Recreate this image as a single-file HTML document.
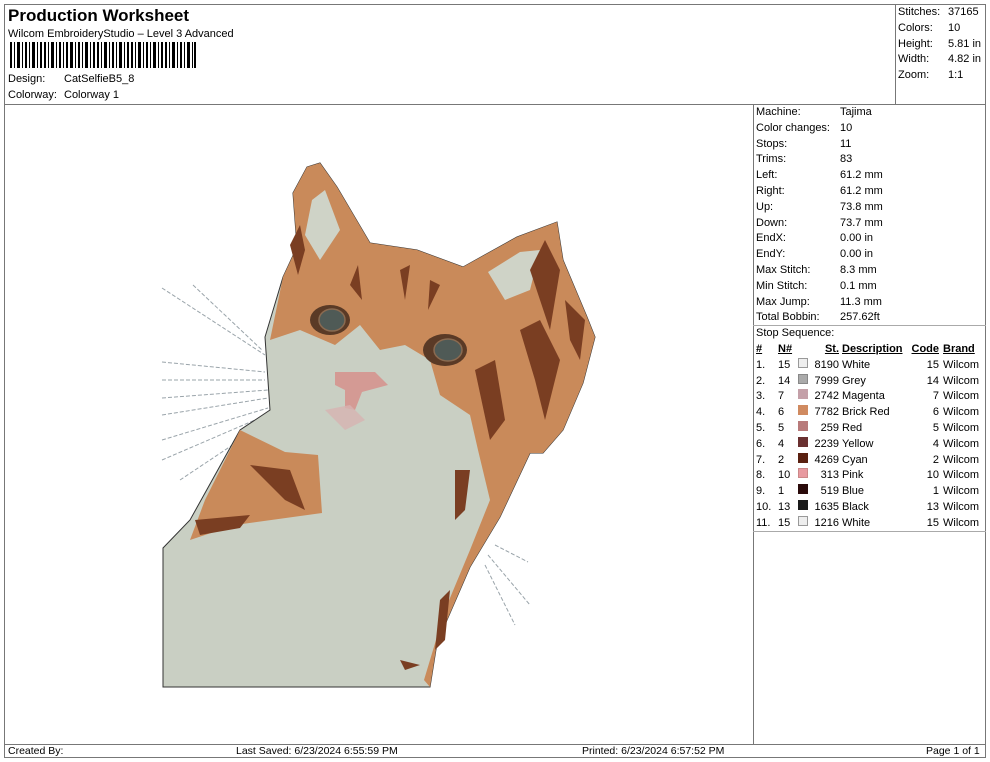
<!DOCTYPE html>
<html><head><meta charset="utf-8"><style>
*{margin:0;padding:0;box-sizing:border-box}
body{width:990px;height:762px;background:#fff;font-family:"Liberation Sans",Arial,sans-serif;font-size:11px;color:#000;position:relative;overflow:hidden}
.a{position:absolute;white-space:nowrap}
.ln{position:absolute;background:#777}
td{padding:0;height:15.8px;white-space:nowrap;font-size:11px}
</style></head><body>
<div class="ln" style="left:4px;top:4px;width:982px;height:1px"></div>
<div class="ln" style="left:4px;top:4px;width:1px;height:754px"></div>
<div class="ln" style="left:985px;top:4px;width:1px;height:754px"></div>
<div class="ln" style="left:4px;top:104px;width:982px;height:1px"></div>
<div class="ln" style="left:895px;top:4px;width:1px;height:100px"></div>
<div class="ln" style="left:753px;top:104px;width:1px;height:640px"></div>
<div class="ln" style="left:753px;top:325px;width:233px;height:1px;background:#aaa"></div>
<div class="ln" style="left:753px;top:531px;width:233px;height:1px;background:#aaa"></div>
<div class="ln" style="left:4px;top:744px;width:982px;height:1px"></div>
<div class="ln" style="left:4px;top:757px;width:982px;height:1px"></div>

<div class="a" style="left:8px;top:6px;font-size:17px;font-weight:bold">Production Worksheet</div>
<div class="a" style="left:8px;top:28px">Wilcom EmbroideryStudio – Level 3 Advanced</div>
<svg class="a" style="left:10px;top:42px" width="186" height="26"><g fill="#000">
<rect x="0" width="2" height="26"/><rect x="4" width="1" height="26"/><rect x="7" width="3" height="26"/><rect x="12" width="1" height="26"/><rect x="15" width="2" height="26"/><rect x="19" width="1" height="26"/><rect x="22" width="3" height="26"/><rect x="27" width="1" height="26"/><rect x="30" width="2" height="26"/><rect x="34" width="2" height="26"/><rect x="38" width="1" height="26"/><rect x="41" width="3" height="26"/><rect x="46" width="1" height="26"/><rect x="49" width="2" height="26"/><rect x="53" width="1" height="26"/><rect x="56" width="2" height="26"/><rect x="60" width="3" height="26"/><rect x="65" width="1" height="26"/><rect x="68" width="2" height="26"/><rect x="72" width="1" height="26"/><rect x="75" width="3" height="26"/><rect x="80" width="1" height="26"/><rect x="83" width="2" height="26"/><rect x="87" width="2" height="26"/><rect x="91" width="1" height="26"/><rect x="94" width="3" height="26"/><rect x="99" width="1" height="26"/><rect x="102" width="2" height="26"/><rect x="106" width="1" height="26"/><rect x="109" width="3" height="26"/><rect x="114" width="1" height="26"/><rect x="117" width="2" height="26"/><rect x="121" width="2" height="26"/><rect x="125" width="1" height="26"/><rect x="128" width="3" height="26"/><rect x="133" width="1" height="26"/><rect x="136" width="2" height="26"/><rect x="140" width="1" height="26"/><rect x="143" width="3" height="26"/><rect x="148" width="1" height="26"/><rect x="151" width="2" height="26"/><rect x="155" width="2" height="26"/><rect x="159" width="1" height="26"/><rect x="162" width="3" height="26"/><rect x="167" width="1" height="26"/><rect x="170" width="2" height="26"/><rect x="174" width="1" height="26"/><rect x="177" width="3" height="26"/><rect x="182" width="1" height="26"/><rect x="184" width="2" height="26"/></g></svg>
<div class="a" style="left:8px;top:73px">Design:</div><div class="a" style="left:64px;top:73px">CatSelfieB5_8</div>
<div class="a" style="left:8px;top:89px">Colorway:</div><div class="a" style="left:64px;top:89px">Colorway 1</div>

<div class="a" style="left:898px;top:5px;line-height:15.8px">Stitches:<br>Colors:<br>Height:<br>Width:<br>Zoom:</div>
<div class="a" style="left:948px;top:5px;line-height:15.8px">37165<br>10<br>5.81 in<br>4.82 in<br>1:1</div>

<div class="a" style="left:756px;top:105px;line-height:15.8px">Machine:<br>Color changes:<br>Stops:<br>Trims:<br>Left:<br>Right:<br>Up:<br>Down:<br>EndX:<br>EndY:<br>Max Stitch:<br>Min Stitch:<br>Max Jump:<br>Total Bobbin:<br>Stop Sequence:</div>
<div class="a" style="left:840px;top:105px;line-height:15.8px">Tajima<br>10<br>11<br>83<br>61.2 mm<br>61.2 mm<br>73.8 mm<br>73.7 mm<br>0.00 in<br>0.00 in<br>8.3 mm<br>0.1 mm<br>11.3 mm<br>257.62ft</div>

<table class="a" style="left:756px;top:342px;border-collapse:collapse;line-height:15.8px">
<tr style="font-weight:bold;text-decoration:underline"><td style="width:22px">#</td><td style="width:20px">N#</td><td style="width:14px"></td><td style="width:27px;text-align:right">St.</td><td style="width:70px;padding-left:3px">Description</td><td style="width:30px;text-align:right">Code</td><td style="padding-left:4px">Brand</td></tr>
<tr><td>1.</td><td>15</td><td><i style="display:inline-block;width:10px;height:10px;background:#eee;border:1px solid #999"></i></td><td style="text-align:right">8190</td><td style="padding-left:3px">White</td><td style="text-align:right">15</td><td style="padding-left:4px">Wilcom</td></tr>
<tr><td>2.</td><td>14</td><td><i style="display:inline-block;width:10px;height:10px;background:#aaa;border:1px solid #888"></i></td><td style="text-align:right">7999</td><td style="padding-left:3px">Grey</td><td style="text-align:right">14</td><td style="padding-left:4px">Wilcom</td></tr>
<tr><td>3.</td><td>7</td><td><i style="display:inline-block;width:10px;height:10px;background:#c4a0a8"></i></td><td style="text-align:right">2742</td><td style="padding-left:3px">Magenta</td><td style="text-align:right">7</td><td style="padding-left:4px">Wilcom</td></tr>
<tr><td>4.</td><td>6</td><td><i style="display:inline-block;width:10px;height:10px;background:#d08a60"></i></td><td style="text-align:right">7782</td><td style="padding-left:3px">Brick Red</td><td style="text-align:right">6</td><td style="padding-left:4px">Wilcom</td></tr>
<tr><td>5.</td><td>5</td><td><i style="display:inline-block;width:10px;height:10px;background:#b87a7a"></i></td><td style="text-align:right">259</td><td style="padding-left:3px">Red</td><td style="text-align:right">5</td><td style="padding-left:4px">Wilcom</td></tr>
<tr><td>6.</td><td>4</td><td><i style="display:inline-block;width:10px;height:10px;background:#6a3030"></i></td><td style="text-align:right">2239</td><td style="padding-left:3px">Yellow</td><td style="text-align:right">4</td><td style="padding-left:4px">Wilcom</td></tr>
<tr><td>7.</td><td>2</td><td><i style="display:inline-block;width:10px;height:10px;background:#5a2010"></i></td><td style="text-align:right">4269</td><td style="padding-left:3px">Cyan</td><td style="text-align:right">2</td><td style="padding-left:4px">Wilcom</td></tr>
<tr><td>8.</td><td>10</td><td><i style="display:inline-block;width:10px;height:10px;background:#e89aa0;border:1px solid #c88"></i></td><td style="text-align:right">313</td><td style="padding-left:3px">Pink</td><td style="text-align:right">10</td><td style="padding-left:4px">Wilcom</td></tr>
<tr><td>9.</td><td>1</td><td><i style="display:inline-block;width:10px;height:10px;background:#2a0a0a"></i></td><td style="text-align:right">519</td><td style="padding-left:3px">Blue</td><td style="text-align:right">1</td><td style="padding-left:4px">Wilcom</td></tr>
<tr><td>10.</td><td>13</td><td><i style="display:inline-block;width:10px;height:10px;background:#1a1a1a"></i></td><td style="text-align:right">1635</td><td style="padding-left:3px">Black</td><td style="text-align:right">13</td><td style="padding-left:4px">Wilcom</td></tr>
<tr><td>11.</td><td>15</td><td><i style="display:inline-block;width:10px;height:10px;background:#eee;border:1px solid #999"></i></td><td style="text-align:right">1216</td><td style="padding-left:3px">White</td><td style="text-align:right">15</td><td style="padding-left:4px">Wilcom</td></tr>
</table>

<svg class="a" style="left:0;top:0" width="753" height="744">
<g stroke="#9aa4aa" stroke-width="1" stroke-dasharray="4,2" fill="none">
<path d="M162,288 L265,355"/><path d="M193,285 L262,350"/><path d="M162,362 L265,372"/><path d="M162,380 L265,380"/><path d="M162,398 L268,390"/><path d="M162,415 L268,398"/><path d="M162,440 L268,408"/><path d="M162,460 L255,420"/><path d="M180,480 L240,440"/><path d="M180,535 L225,470"/>
<path d="M495,545 L528,562"/><path d="M488,555 L530,605"/><path d="M485,565 L515,625"/></g>
<polygon fill="#c9cfc3" stroke="#333" stroke-width="1" points="163,548 190,520 240,430 270,410 265,337 283,277 297,247 293,193 307,167 320,163 337,187 370,243 417,250 463,267 517,237 557,222 563,260 587,317 595,337 583,383 563,430 543,453 530,453 500,517 470,567 437,643 430,687 163,687"/>
<polygon fill="#c98a5a" points="283,277 297,247 293,193 307,167 320,163 337,187 370,243 417,250 463,267 517,237 557,222 563,260 587,317 595,337 583,383 563,430 543,453 530,453 500,517 470,567 437,643 430,687 424,680 445,610 470,550 490,500 478,450 470,415 440,395 430,360 405,345 380,350 360,325 335,345 300,330 270,340"/>
<polygon fill="#c98a5a" points="240,430 285,452 318,455 322,513 235,525 190,540 205,500"/>
<polygon fill="#cfd3c7" points="312,200 325,190 340,230 320,260 305,235"/>
<polygon fill="#cfd3c7" points="488,272 520,252 540,250 530,290 505,300"/>
<g fill="#7a3e22">
<path d="M290,245 L300,225 L305,250 L298,275Z"/><path d="M350,285 L358,265 L362,300Z"/><path d="M400,270 L410,265 L405,300Z"/><path d="M430,280 L440,285 L428,310Z"/>
<path d="M530,270 L545,240 L560,270 L550,330 L540,300Z"/><path d="M520,330 L540,320 L560,360 L545,420 L535,380Z"/><path d="M565,300 L585,320 L580,360 L570,340Z"/>
<path d="M475,370 L495,360 L505,420 L490,440Z"/><path d="M455,470 L470,470 L465,510 L455,520Z"/>
<path d="M250,465 L290,470 L305,510 L285,500Z"/><path d="M195,520 L250,515 L240,528 L200,535Z"/>
<path d="M440,600 L450,590 L445,640 L435,650Z"/><path d="M400,660 L420,665 L405,670Z"/>
</g>
<ellipse cx="330" cy="320" rx="20" ry="15" fill="#5a3a26"/><ellipse cx="332" cy="320" rx="13" ry="11" fill="#4f5a56"/><ellipse cx="332" cy="320" rx="13" ry="11" fill="none" stroke="#8a6a50" stroke-width="1.5"/>
<ellipse cx="445" cy="350" rx="22" ry="16" fill="#5a3a26"/><ellipse cx="448" cy="350" rx="14" ry="11" fill="#4f5a56"/><ellipse cx="448" cy="350" rx="14" ry="11" fill="none" stroke="#8a6a50" stroke-width="1.5"/>
<path d="M335,372 L375,372 L388,385 L362,392 L355,410 L345,408 L345,390 L335,385Z" fill="#d49a94"/>
<path d="M325,410 L350,405 L365,420 L345,430Z" fill="#d7b3b2" opacity=".8"/>
</svg>

<div class="a" style="left:8px;top:745px;font-size:10.5px">Created By:</div>
<div class="a" style="left:236px;top:745px;font-size:10.5px">Last Saved: 6/23/2024 6:55:59 PM</div>
<div class="a" style="left:582px;top:745px;font-size:10.5px">Printed: 6/23/2024 6:57:52 PM</div>
<div class="a" style="left:926px;top:745px;font-size:10.5px">Page 1 of 1</div>
</body></html>
